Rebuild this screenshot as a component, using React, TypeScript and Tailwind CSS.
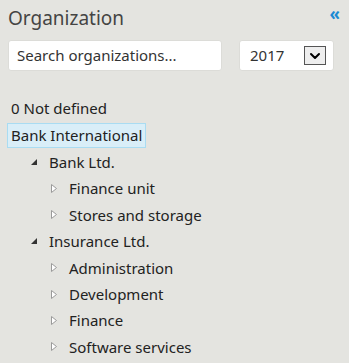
import { ChevronDown } from 'lucide-react';

interface Node {
  label: string;
  children?: Node[];
}

const tree: Node[] = [
  {
    label: 'Bank Ltd.',
    children: [{ label: 'Finance unit' }, { label: 'Stores and storage' }],
  },
  {
    label: 'Insurance Ltd.',
    children: [
      { label: 'Administration' },
      { label: 'Development' },
      { label: 'Finance' },
      { label: 'Software services' },
    ],
  },
];

function OpenArrow() {
  return (
    <svg width="6" height="6" viewBox="0 0 6 6" className="shrink-0">
      <path d="M6 0 L6 6 L0 6 Z" fill="#333" />
    </svg>
  );
}

function ClosedArrow() {
  return (
    <svg width="6" height="9" viewBox="0 0 6 9" className="shrink-0">
      <path d="M0.5 0.5 L5.5 4.5 L0.5 8.5 Z" fill="#fff" stroke="#9a9a9a" strokeWidth="1" />
    </svg>
  );
}

function Row({ node, depth }: { node: Node; depth: number }) {
  const open = !!node.children;
  return (
    <>
      <div
        className="flex items-center h-[26.4px]"
        style={{ paddingLeft: 31 + depth * 20 }}
      >
        <span className="w-[18px] flex items-center">
          {open ? <OpenArrow /> : <ClosedArrow />}
        </span>
        <span>{node.label}</span>
      </div>
      {node.children?.map((c) => (
        <Row key={c.label} node={c} depth={depth + 1} />
      ))}
    </>
  );
}

export default function App() {
  return (
    <div className="w-[349px] h-[363px] bg-[#e4e4e0] text-[#222] font-['Noto_Sans','Lato',sans-serif] overflow-hidden">
      {/* Header */}
      <div className="flex items-start justify-between pl-2 pr-[9px] pt-[5px]">
        <h2 className="text-[19px] text-[#444] leading-[26px]">Organization</h2>
        <span className="text-[#1a8ad4] text-[17px] font-bold leading-[20px] mt-[-1px]">«</span>
      </div>

      {/* Search + year */}
      <div className="flex items-center justify-between pl-2 pr-[15px] mt-[9px]">
        <div className="w-[214px] h-[31px] bg-white rounded-[3px] border border-[#dcdcd8] flex items-center px-2 text-[15px] text-[#333]">
          Search organizations...
        </div>
        <div className="w-[95px] h-[31px] bg-white rounded-[3px] border border-[#dcdcd8] flex items-center justify-between pl-[10px] pr-[7px] text-[15px] text-[#333]">
          <span>2017</span>
          <span className="w-[22px] h-[19px] bg-[#eee] border border-[#555] flex items-center justify-center">
            <ChevronDown size={16} strokeWidth={3} className="text-black" />
          </span>
        </div>
      </div>

      {/* Tree */}
      <div className="mt-[25px] text-[15px]">
        <div className="pl-[11px] h-[24px] flex items-center">0 Not defined</div>
        <div className="pl-[7px] mt-[3px] mb-[1px]">
          <span className="inline-flex items-center h-[25px] px-[3px] bg-[#d9eef8] border border-[#a9dcf2]">
            Bank International
          </span>
        </div>
        {tree.map((n) => (
          <Row key={n.label} node={n} depth={0} />
        ))}
      </div>
    </div>
  );
}
